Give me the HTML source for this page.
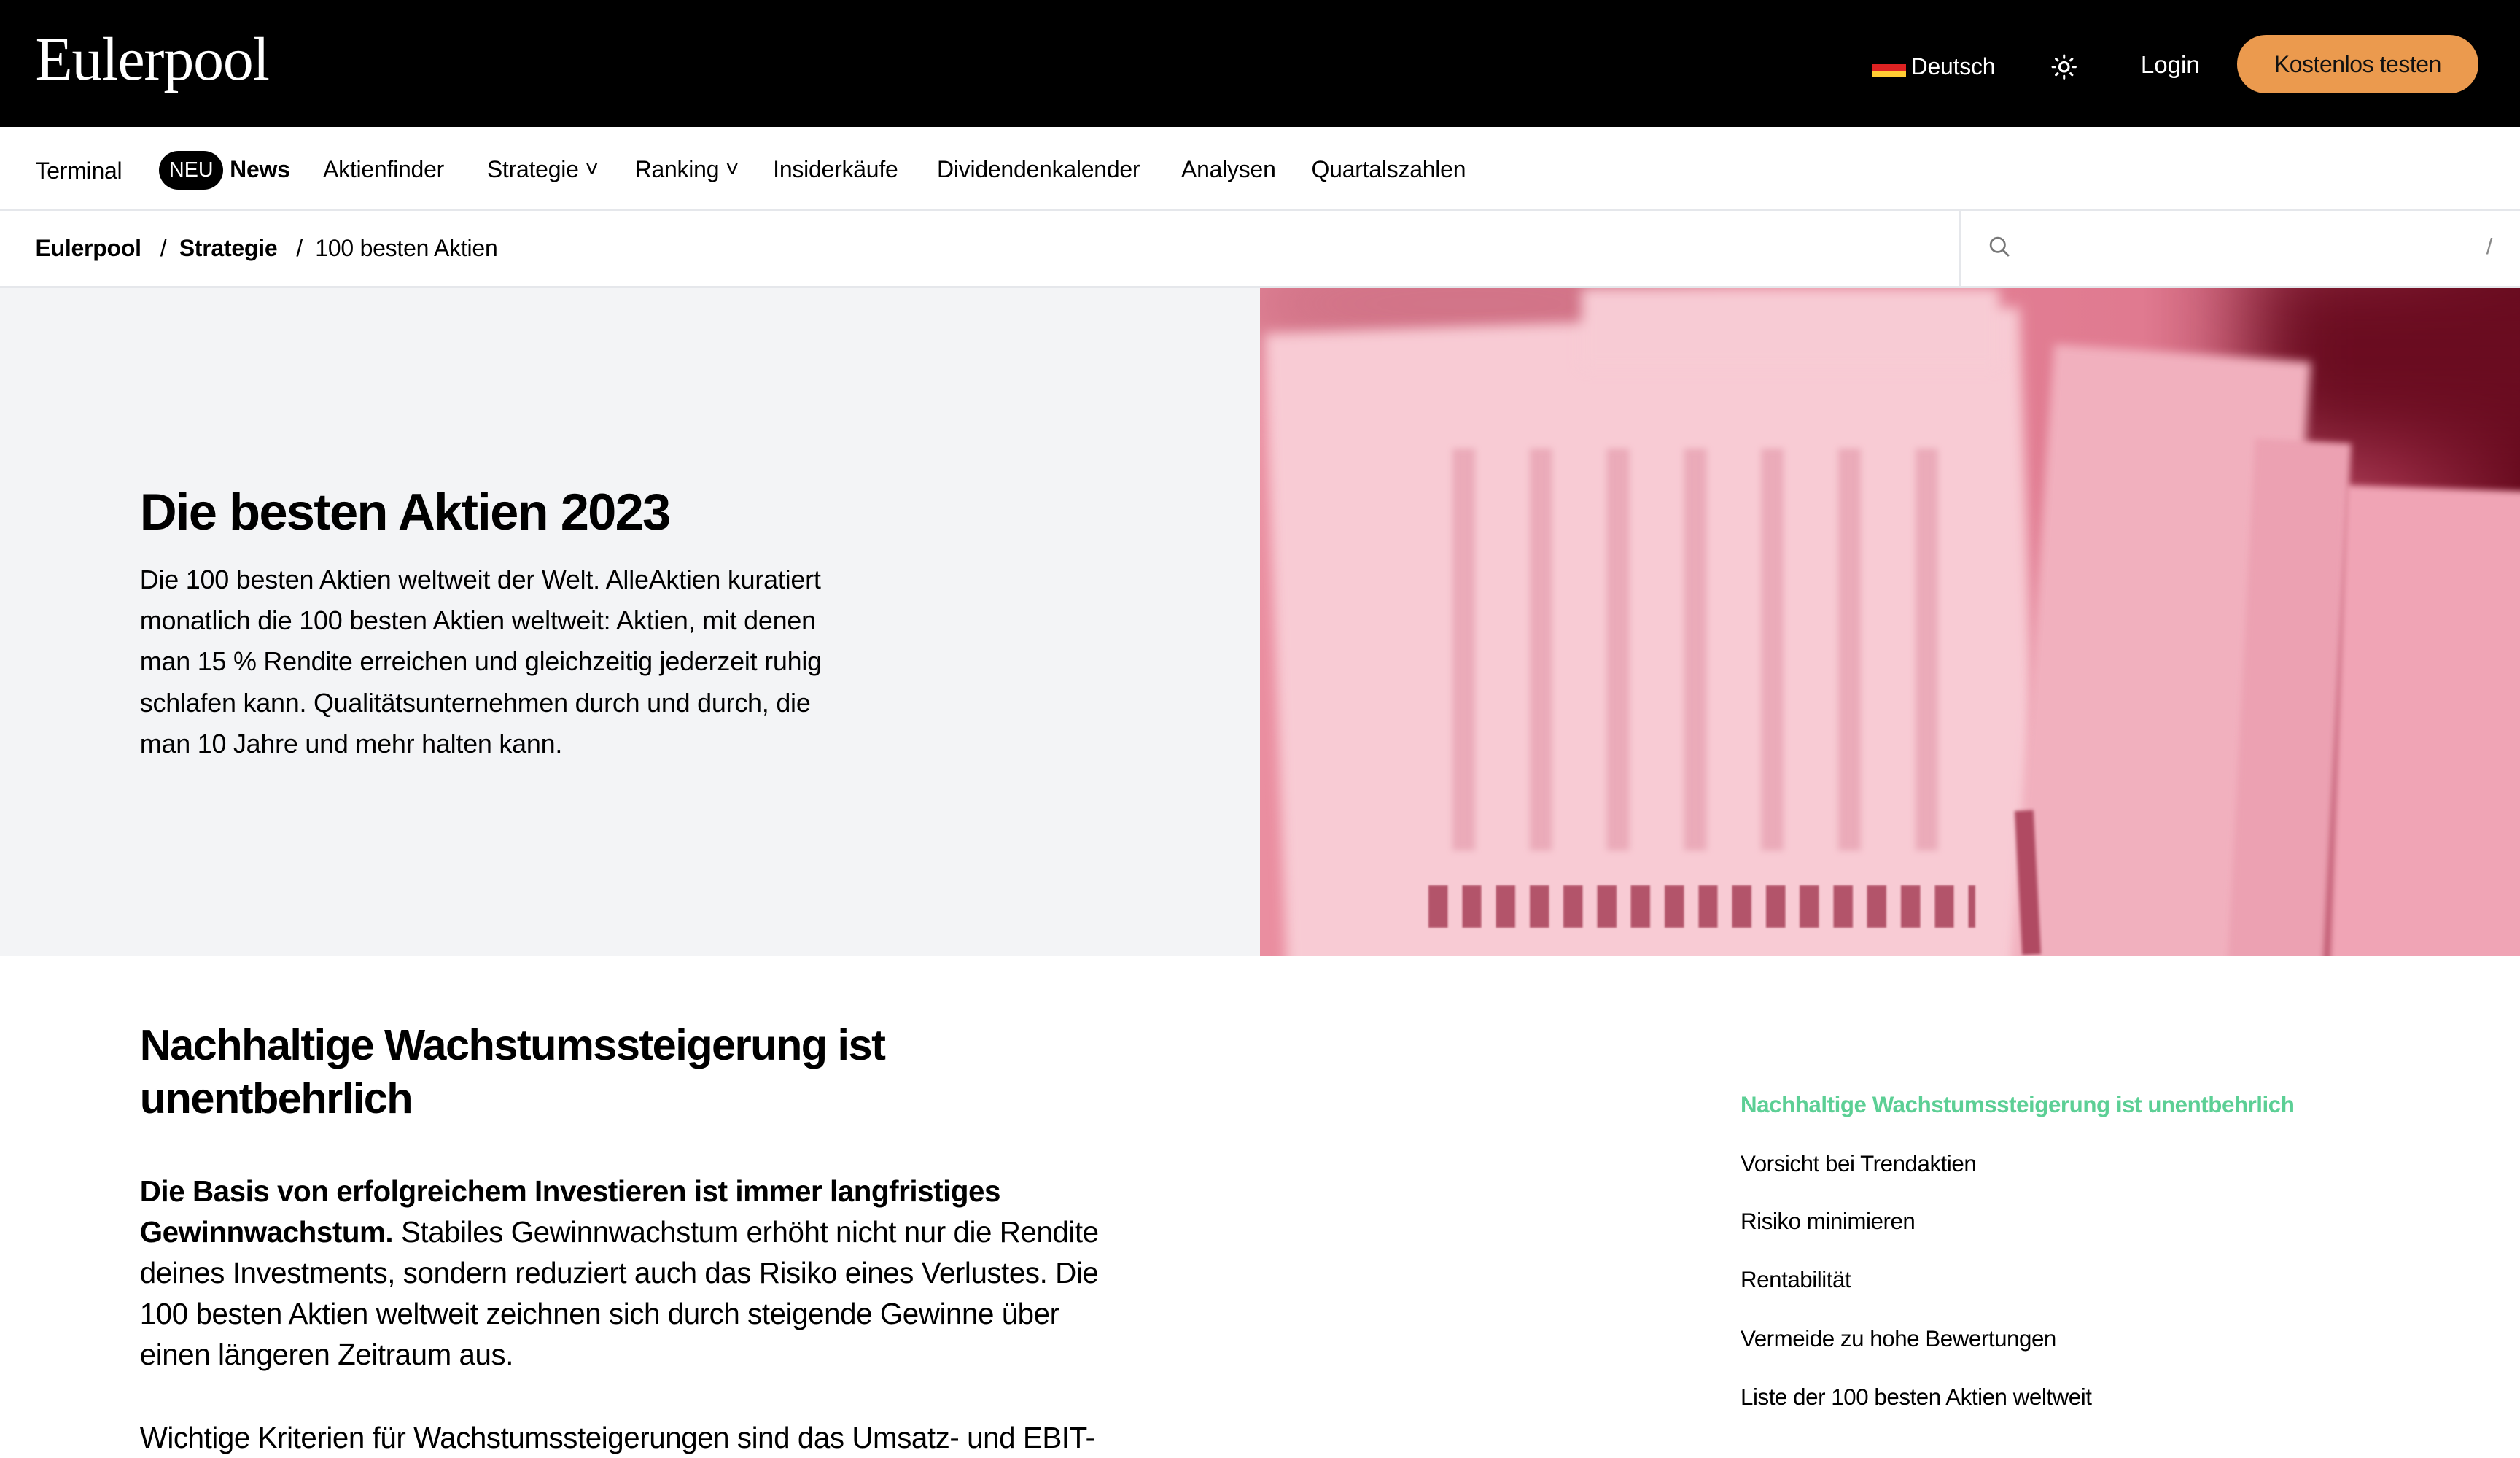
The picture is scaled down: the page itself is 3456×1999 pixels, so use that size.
<!DOCTYPE html>
<html><head><meta charset="utf-8"><style>
html,body{margin:0;padding:0;background:#fff;overflow:hidden}
body{width:1568px;height:907px;zoom:2.2041;font-family:"Liberation Sans",sans-serif;color:#000;position:relative}
.a{position:absolute;white-space:nowrap}
.hdr{position:absolute;left:0;top:0;width:1568px;height:79px;background:#000}
.nav span{position:absolute;top:97px;font-size:14.5px;letter-spacing:-0.1px}
.toc{position:absolute;left:1083px;font-size:14.2px;letter-spacing:-0.2px}
</style></head><body>
<div class="hdr"></div>
<div class="a" style="left:22px;top:15px;color:#fff;font-family:'Liberation Serif',serif;font-size:38px;letter-spacing:-0.5px">Eulerpool</div>
<div class="a" style="left:1165px;top:36px;width:21px;height:12px;background:linear-gradient(#000 0 33%,#d22 33% 66%,#fc3 66%)"></div>
<div class="a" style="left:1189px;top:33px;color:#fff;font-size:14.5px;letter-spacing:-0.1px">Deutsch</div>
<svg class="a" style="left:1276px;top:33px" width="17" height="17" viewBox="0 0 24 24" fill="none" stroke="#fff" stroke-width="2" stroke-linecap="round"><circle cx="12" cy="12" r="4"/><path d="M12 2v2M12 20v2M2 12h2M20 12h2M4.9 4.9l1.4 1.4M17.7 17.7l1.4 1.4M4.9 19.1l1.4-1.4M17.7 6.3l1.4-1.4"/></svg>
<div class="a" style="left:1332px;top:32px;color:#fff;font-size:15px">Login</div>
<div class="a" style="left:1392px;top:22px;width:150px;height:36px;border-radius:18px;background:#eb9a4e;color:#111;font-size:14.5px;line-height:37px;text-align:center;letter-spacing:-0.2px">Kostenlos testen</div>
<div class="nav">
<span style="left:22px;top:98px">Terminal</span>
<div class="a" style="left:99px;top:94px;width:40px;height:24px;border-radius:12px;background:#000;color:#fff;font-size:13px;line-height:24px;text-align:center">NEU</div>
<span style="left:143px;font-weight:bold">News</span>
<span style="left:201px">Aktienfinder</span>
<span style="left:303px">Strategie ˅</span>
<span style="left:395px">Ranking ˅</span>
<span style="left:481px">Insiderkäufe</span>
<span style="left:583px">Dividendenkalender</span>
<span style="left:735px">Analysen</span>
<span style="left:816px">Quartalszahlen</span>
</div>
<div class="a" style="left:0;top:130px;width:1568px;height:1px;background:#e5e7eb"></div>
<div class="a" style="left:1219px;top:131px;width:1px;height:47px;background:#e5e7eb"></div>
<div class="a" style="left:22px;top:146px;font-size:14.5px;letter-spacing:-0.1px"><b>Eulerpool</b>&nbsp;&nbsp; / &nbsp;<b>Strategie</b>&nbsp;&nbsp; / &nbsp;100 besten Aktien</div>
<svg class="a" style="left:1237px;top:146px" width="15" height="15" viewBox="0 0 24 24" fill="none" stroke="#777" stroke-width="2"><circle cx="10" cy="10" r="7"/><path d="M15 15l6 6"/></svg>
<div class="a" style="left:1547px;top:145px;color:#888;font-size:14px">/</div>
<div class="a" style="left:0;top:178px;width:1568px;height:1px;background:#e5e7eb"></div>
<div class="a" style="left:0;top:179px;width:784px;height:416px;background:#f3f4f6"></div>
<div class="a" style="left:87px;top:300px;font-size:32px;font-weight:bold;letter-spacing:-0.8px">Die besten Aktien 2023</div>
<div class="a" style="left:87px;top:348px;width:445px;white-space:normal;font-size:16.3px;line-height:25.5px;letter-spacing:-0.1px">Die 100 besten Aktien weltweit der Welt. AlleAktien kuratiert monatlich die 100 besten Aktien weltweit: Aktien, mit denen man 15 % Rendite erreichen und gleichzeitig jederzeit ruhig schlafen kann. Qualitätsunternehmen durch und durch, die man 10 Jahre und mehr halten kann.</div>
<div class="a" style="left:784px;top:179px;width:784px;height:416px;overflow:hidden;background:linear-gradient(90deg,#ea8ea0,#e07a90 70%,#a0304a 90%,#6a0c20)">
<div class="a" style="left:-20px;top:-40px;width:300px;height:100px;border-radius:50%;background:#d27488;filter:blur(20px)"></div>
<div class="a" style="left:620px;top:-20px;width:220px;height:120px;background:#6a0c20;filter:blur(25px)"></div>
<div class="a" style="left:10px;top:20px;width:470px;height:420px;background:#f8cbd4;transform:rotate(-2deg);filter:blur(4px)"></div>
<div class="a" style="left:200px;top:0;width:260px;height:50px;background:#f7cbd4;filter:blur(4px)"></div>
<div class="a" style="left:480px;top:40px;width:160px;height:400px;background:#f1b0be;transform:rotate(4deg);filter:blur(3px)"></div>
<div class="a" style="left:610px;top:95px;width:60px;height:340px;background:#eca1b2;transform:rotate(3deg);filter:blur(2px)"></div>
<div class="a" style="left:670px;top:125px;width:130px;height:320px;background:#f0a4b5;transform:rotate(2deg);filter:blur(2px)"></div>
<div class="a" style="left:100px;top:100px;width:340px;height:250px;background:repeating-linear-gradient(90deg,transparent 0 20px,rgba(210,110,135,.35) 20px 34px,transparent 34px 48px);filter:blur(2px)"></div>
<div class="a" style="left:105px;top:372px;width:340px;height:26px;background:repeating-linear-gradient(90deg,#a84058 0 12px,transparent 12px 21px);opacity:.85;filter:blur(.5px)"></div>
<div class="a" style="left:472px;top:325px;width:12px;height:90px;background:#b04a62;transform:rotate(-3deg);filter:blur(1px)"></div>
</div>
<div class="a" style="left:87px;top:634px;font-size:27px;font-weight:bold;line-height:33px;letter-spacing:-0.7px">Nachhaltige Wachstumssteigerung ist<br>unentbehrlich</div>
<div class="a" style="left:87px;top:728px;width:610px;white-space:normal;font-size:18.3px;line-height:25.5px;letter-spacing:-0.2px"><b>Die Basis von erfolgreichem Investieren ist immer langfristiges Gewinnwachstum.</b> Stabiles Gewinnwachstum erhöht nicht nur die Rendite deines Investments, sondern reduziert auch das Risiko eines Verlustes. Die 100 besten Aktien weltweit zeichnen sich durch steigende Gewinne über einen längeren Zeitraum aus.</div>
<div class="a" style="left:87px;top:884px;font-size:18.3px;letter-spacing:-0.2px">Wichtige Kriterien für Wachstumssteigerungen sind das Umsatz- und EBIT-</div>
<div class="toc" style="top:679px;color:#5ccf95;font-weight:bold">Nachhaltige Wachstumssteigerung ist unentbehrlich</div>
<div class="toc" style="top:716px">Vorsicht bei Trendaktien</div>
<div class="toc" style="top:752px">Risiko minimieren</div>
<div class="toc" style="top:788px">Rentabilität</div>
<div class="toc" style="top:825px">Vermeide zu hohe Bewertungen</div>
<div class="toc" style="top:861px">Liste der 100 besten Aktien weltweit</div>
</body></html>
